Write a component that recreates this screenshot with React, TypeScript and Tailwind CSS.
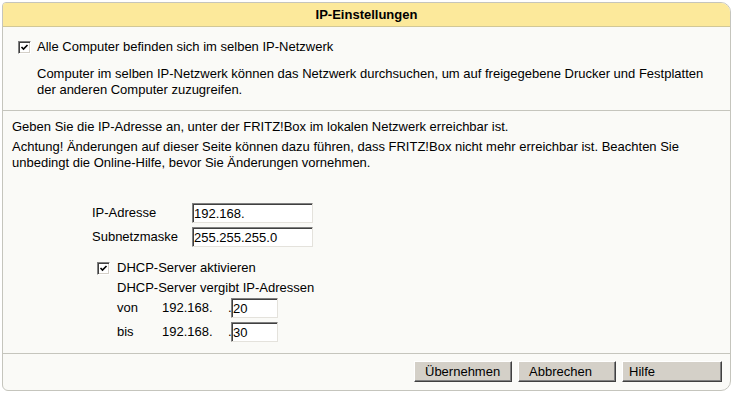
import React from 'react';

function CheckBox() {
  return (
    <span className="inline-flex h-[13px] w-[13px] shrink-0 items-center justify-center border border-t-[#808080] border-l-[#808080] border-b-[#ffffff] border-r-[#ffffff] bg-white shadow-[inset_1px_1px_0_#404040,inset_-1px_-1px_0_#d4d0c8]">
      <svg width="9" height="9" viewBox="0 0 9 9" fill="none">
        <path d="M1.5 4 L3.5 6 L7.5 2" stroke="#000" strokeWidth="1.6" />
      </svg>
    </span>
  );
}

function Field({ value, className }: { value: string; className: string }) {
  return (
    <div
      className={`flex h-[20px] items-center border border-t-[#808080] border-l-[#808080] border-b-[#e4e2dc] border-r-[#e4e2dc] bg-white pl-[1px] text-[13px] leading-none text-black shadow-[inset_1px_1px_0_#404040] ${className}`}
    >
      {value}
    </div>
  );
}

function Btn({ label, className }: { label: string; className: string }) {
  return (
    <button
      className={`flex h-[21px] items-center border border-t-white border-l-white border-b-[#404040] border-r-[#404040] bg-[#d4d0c8] text-[13px] leading-none text-black shadow-[inset_-1px_-1px_0_#808080] ${className}`}
    >
      {label}
    </button>
  );
}

export default function App() {
  return (
    <div className="h-[394px] w-[735px] bg-white pl-[2px] pt-[2px] font-['Liberation_Sans',Arial,sans-serif] text-[13px] leading-[16px] text-black">
      <div className="flex h-[389px] w-[729px] flex-col overflow-hidden rounded-tl-[4px] rounded-tr-[10px] rounded-br-[10px] rounded-bl-[6px] border border-[#c5c5bd] bg-[#fafaf7]">
        {/* Header */}
        <div className="flex h-[24px] shrink-0 items-center justify-center border-b border-[#d2c896] bg-[#fce99b] font-bold">
          IP-Einstellungen
        </div>

        {/* Netzwerk section */}
        <div className="shrink-0 border-b border-[#c5c5bd] pb-[12px] pt-[12px]">
          <div className="flex items-center gap-[6px] pl-[15px]">
            <CheckBox />
            <span>Alle Computer befinden sich im selben IP-Netzwerk</span>
          </div>
          <p className="mt-[11px] pl-[34px] pr-[20px]">
            Computer im selben IP-Netzwerk können das Netzwerk durchsuchen, um auf freigegebene Drucker und Festplatten der anderen Computer zuzugreifen.
          </p>
        </div>

        {/* IP section */}
        <div className="flex-1 border-b border-[#c5c5bd] pl-[9px] pt-[8px]">
          <p>Geben Sie die IP-Adresse an, unter der FRITZ!Box im lokalen Netzwerk erreichbar ist.</p>
          <p className="mt-[4px] pr-[20px]">
            Achtung! Änderungen auf dieser Seite können dazu führen, dass FRITZ!Box nicht mehr erreichbar ist. Beachten Sie unbedingt die Online-Hilfe, bevor Sie Änderungen vornehmen.
          </p>

          <div className="mt-[32px] pl-[80px]">
            <div className="grid grid-cols-[100px_121px] gap-y-[4px]">
              <span className="flex items-center">IP-Adresse</span>
              <Field value="192.168." className="w-[121px]" />
              <span className="flex items-center">Subnetzmaske</span>
              <Field value="255.255.255.0" className="w-[121px]" />
            </div>

            <div className="mt-[13px] pl-[5px]">
              <div className="flex items-center gap-[7px]">
                <CheckBox />
                <span>DHCP-Server aktivieren</span>
              </div>
              <div className="pl-[20px]">
                <p className="mt-[4px]">DHCP-Server vergibt IP-Adressen</p>
                <div className="mt-[2px] flex flex-col gap-[4px]">
                  <div className="flex h-[20px] items-center">
                    <span className="w-[45px]">von</span>
                    <span className="w-[66px]">192.168.</span>
                    <span className="w-[3px]">.</span>
                    <Field value="20" className="w-[47px]" />
                  </div>
                  <div className="flex h-[20px] items-center">
                    <span className="w-[45px]">bis</span>
                    <span className="w-[66px]">192.168.</span>
                    <span className="w-[3px]">.</span>
                    <Field value="30" className="w-[47px]" />
                  </div>
                </div>
              </div>
            </div>
          </div>
        </div>

        {/* Buttons */}
        <div className="flex h-[36px] shrink-0 items-start justify-end gap-[6px] pr-[8px] pt-[7px]">
          <Btn label="Übernehmen" className="w-[98px] pl-[10px]" />
          <Btn label="Abbrechen" className="w-[98px] pl-[10px]" />
          <Btn label="Hilfe" className="w-[100px] pl-[6px]" />
        </div>
      </div>
    </div>
  );
}
